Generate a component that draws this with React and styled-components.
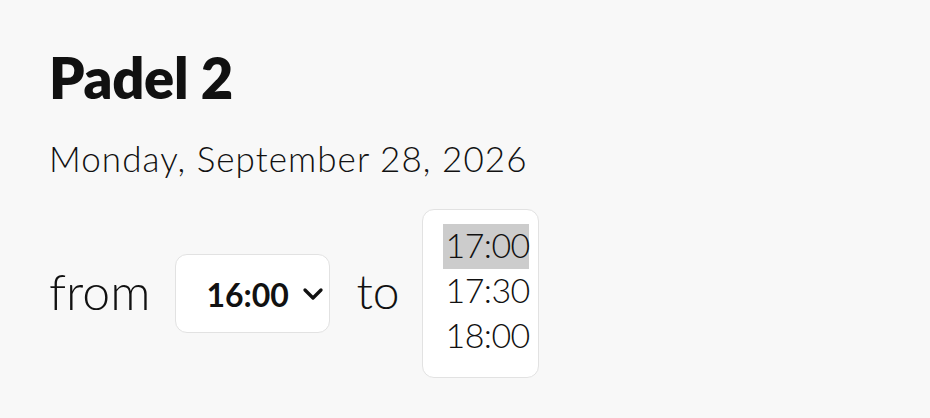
import React from 'react';
import styled, { createGlobalStyle } from 'styled-components';
import { ChevronDown } from 'lucide-react';

const GlobalStyle = createGlobalStyle`
  html, body {
    margin: 0;
    padding: 0;
    background: #f8f8f8;
  }
  body {
    font-family: Lato, "Noto Sans", sans-serif;
    color: #111111;
  }
`;

const Page = styled.div`
  padding: 44px 49px 0;
  display: flex;
  flex-direction: column;
`;

const Title = styled.h1`
  margin: 0;
  font-size: 56px;
  font-weight: 800;
  line-height: 68px;
  letter-spacing: -0.3px;
`;

const DateLine = styled.p`
  margin: 24px 0 0;
  font-size: 35px;
  font-weight: 300;
  line-height: 44px;
  letter-spacing: 1.05px;
`;

const Row = styled.div`
  margin-top: 29px;
  display: flex;
  align-items: center;
`;

const Word = styled.span`
  font-size: ${(p) => p.$size}px;
  font-weight: 300;
  line-height: 1;
  margin-right: ${(p) => p.$gap}px;
  position: relative;
  top: -3px;
`;

const SelectWrap = styled.div`
  position: relative;
  margin-right: 26px;

  svg {
    position: absolute;
    right: 1px;
    top: 50%;
    transform: translateY(-50%);
    pointer-events: none;
  }
`;

const Dropdown = styled.select`
  appearance: none;
  display: block;
  width: 155px;
  height: 79px;
  padding: 2px 10px 0 30px;
  border: 1px solid #e2e2e2;
  border-radius: 12px;
  background: #ffffff;
  font-family: inherit;
  font-size: 32px;
  font-weight: 700;
  color: #111111;
  outline: none;
`;

const ListBox = styled.select`
  width: 117px;
  height: 169px;
  padding: 14px 9px 14px 20px;
  border: 1px solid #e2e2e2;
  border-radius: 12px;
  background: #ffffff;
  font-family: inherit;
  font-size: 34px;
  font-weight: 300;
  color: #111111;
  overflow: hidden;
  outline: none;

  option {
    font-family: Lato, "Noto Sans", sans-serif;
    font-weight: 300;
    padding: 0 3px;
    line-height: 45px;
    height: 45px;
    letter-spacing: -0.6px;
  }
  option:checked {
    background: #cccccc;
    color: #111111;
  }
`;

const from = ['15:00', '15:30', '16:00', '16:30'];
const to = ['17:00', '17:30', '18:00'];

export default function App() {
  return (
    <>
      <GlobalStyle />
      <Page>
        <Title>Padel 2</Title>
        <DateLine>Monday, September 28, 2026</DateLine>
        <Row>
          <Word $size={50} $gap={25}>from</Word>
          <SelectWrap>
            <Dropdown defaultValue="16:00">
              {from.map((t) => (
                <option key={t}>{t}</option>
              ))}
            </Dropdown>
            <ChevronDown size={32} strokeWidth={2.5} color="#111" />
          </SelectWrap>
          <Word $size={48} $gap={22}>to</Word>
          <ListBox size={3} defaultValue="17:00">
            {to.map((t) => (
              <option key={t}>{t}</option>
            ))}
          </ListBox>
        </Row>
      </Page>
    </>
  );
}
